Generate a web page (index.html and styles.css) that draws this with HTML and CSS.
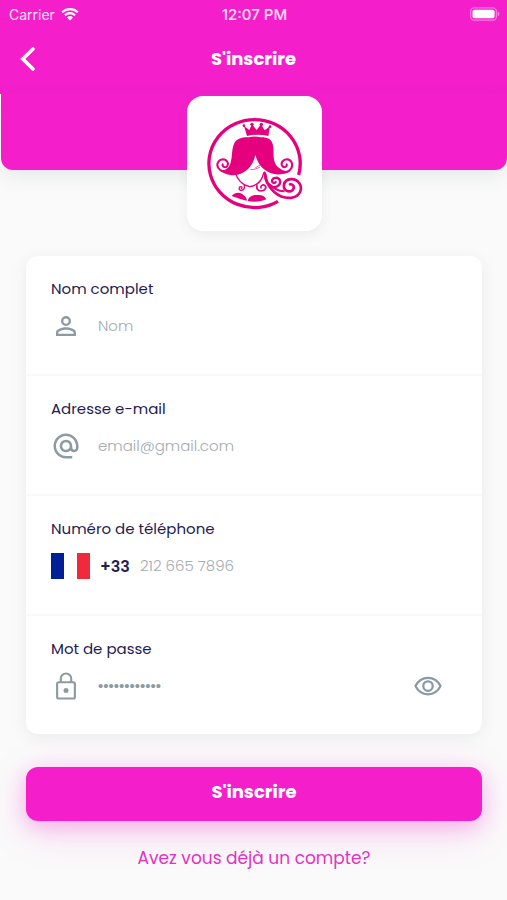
FILE: index.html
```html
<!DOCTYPE html>
<html lang="fr">
<head>
<meta charset="utf-8">
<meta name="viewport" content="width=device-width, initial-scale=1">
<title>S'inscrire</title>
<link rel="stylesheet" href="styles.css">
</head>
<body>
<header class="app-bar">
  <div class="status">
    <div class="carrier">
      <span>Carrier</span>
      <svg class="wifi" viewBox="0 0 18 14" aria-hidden="true">
        <path d="M1.2 5.2a11.3 11.3 0 0 1 15.6 0M4 8.2a7.2 7.2 0 0 1 10 0" fill="none" stroke="currentColor" stroke-width="2.2"/>
        <path d="M9 13.6l-3-3.1a4.3 4.3 0 0 1 6 0z" fill="currentColor"/>
      </svg>
    </div>
    <time>12:07 PM</time>
    <svg class="battery" viewBox="0 0 31 14" aria-hidden="true">
      <rect x=".7" y=".7" width="26.6" height="12.6" rx="3.6" fill="none" stroke="#fff" stroke-opacity=".4" stroke-width="1.4"/>
      <rect x="2.6" y="2.6" width="22.8" height="8.8" rx="1.8" fill="#fff"/>
      <path d="M28.6 4.8c2.4.6 2.4 3.8 0 4.4z" fill="#fff" fill-opacity=".45"/>
    </svg>
  </div>
  <div class="title-row">
    <button class="back" type="button" aria-label="Retour">
      <svg viewBox="0 0 16 26" aria-hidden="true"><path d="M13 3L2.8 13 13 23" fill="none" stroke="currentColor" stroke-width="3.6" stroke-linecap="round"/></svg>
    </button>
    <h1>S'inscrire</h1>
  </div>
</header>

<div class="banner">
  <div class="logo">
    <svg viewBox="20 18 405 405" aria-hidden="true">
      <g fill="none" stroke="#e5007e" stroke-linecap="round" stroke-linejoin="round">
        <path d="M355 255A137 132 0 1 0 293 334" stroke-width="10" stroke-linecap="butt"/>
        <path d="M152 246c-14 2-30-1-38-12-8-13 1-25 13-26 13 0 20 13 13 21-6 6-15 1-13-6" stroke-width="6"/>
        <path d="M292 246c16 5 34 1 41-11 7-14-1-26-13-27-13 0-20 12-14 20 6 7 15 2 13-5" stroke-width="6"/>
        <path d="M166 250c4 17 20 36 42 40 22-3 37-18 42-41" stroke-width="4"/>
        <path d="M192 286c2 10-4 16-11 15-7-2-6-11 1-11 4 1 4 5 1 6" stroke-width="4"/>
        <path d="M230 285c-3 12 3 18 12 18 12 0 18-10 12-16-6-5-14-1-12 6" stroke-width="5"/>
        <path d="M253 248c1 25 8 39 24 43 15 2 25-8 22-19-4-12-22-11-24 0 0 7 8 10 11 4" stroke-width="7"/>
        <path d="M255 254c4 41 40 74 80 69 24-4 33-27 22-43-11-18-42-17-46 4-3 17 14 25 25 17 9-8 3-20-7-18" stroke-width="8"/>
        <path d="M266 282c12 12 28 21 44 22" stroke-width="6"/>
        <path d="M212 239c9 0 18-3 26-7M226 233l14-9" stroke-width="2"/>
      </g>
      <g fill="#e5007e">
        <path d="M200 138l-9-30 16 12 8-17 14 17 13-17 11 18 16-12-5 29q-32-7-64 0z"/>
        <circle cx="191" cy="107" r="4"/><circle cx="215" cy="103" r="5"/><circle cx="243" cy="103" r="5"/><circle cx="269" cy="110" r="4"/>
        <path d="M116 238c16 6 29-2 34-17 7-20 3-43 12-62 9-15 26-18 45-17 10-3 22-3 32 0 21-1 34 5 38 20 5 20-1 43 9 61 10 15 29 25 47 18-14 12-36 15-55 10-26-7-44-24-53-56-6 26-18 42-34 51-17 10-31 12-45 8-12-1-23-8-30-16z"/>
        <path d="M154 318c10-12 26-13 35-3 7 5 10 10 11 17-11-2-28-7-46-14z"/>
        <path d="M202 333c3-14 16-19 29-18 13-1 23 3 27 13-17 8-36 9-56 5z"/>
      </g>
    </svg>
  </div>
</div>

<main>
  <form>
    <div class="card">
      <div class="field">
        <label for="name">Nom complet</label>
        <div class="control">
          <svg class="icon" viewBox="0 0 24 24" aria-hidden="true"><path d="M12 5.9a2.1 2.1 0 1 1 0 4.2 2.1 2.1 0 0 1 0-4.2m0 9c2.97 0 6.1 1.46 6.1 2.1v1.1H5.9V17c0-.64 3.13-2.1 6.1-2.1M12 4a4 4 0 1 0 0 8 4 4 0 0 0 0-8m0 9c-2.67 0-8 1.34-8 4v3h16v-3c0-2.66-5.33-4-8-4z"/></svg>
          <input id="name" type="text" placeholder="Nom">
        </div>
      </div>
      <div class="field">
        <label for="email">Adresse e-mail</label>
        <div class="control">
          <svg class="icon" viewBox="0 0 24 24" aria-hidden="true"><path d="M12 2C6.480 2 2 6.480 2 12s4.480 10 10 10h5v-2h-5c-4.340 0-8-3.660-8-8s3.660-8 8-8 8 3.660 8 8v1.430c0 .79-.71 1.570-1.500 1.570s-1.500-.78-1.500-1.570V12c0-2.760-2.240-5-5-5s-5 2.240-5 5 2.240 5 5 5c1.380 0 2.640-.56 3.540-1.470.65.89 1.770 1.470 2.960 1.470 1.970 0 3.500-1.600 3.500-3.570V12c0-5.520-4.480-10-10-10zm0 13c-1.660 0-3-1.340-3-3s1.340-3 3-3 3 1.340 3 3-1.340 3-3 3z"/></svg>
          <input id="email" type="email" placeholder="email@gmail.com">
        </div>
      </div>
      <div class="field">
        <label for="phone">Numéro de téléphone</label>
        <div class="control phone">
          <svg class="flag" viewBox="0 0 39 26" aria-hidden="true"><path fill="#001e96" d="M0 0h13v26H0z"/><path fill="#fff" d="M13 0h13v26H13z"/><path fill="#f02a3c" d="M26 0h13v26H26z"/></svg>
          <span class="prefix">+33</span>
          <input id="phone" type="tel" placeholder="212 665 7896">
        </div>
      </div>
      <div class="field">
        <label for="password">Mot de passe</label>
        <div class="control">
          <svg class="icon" viewBox="0 0 24 24" aria-hidden="true"><path fill="none" stroke="currentColor" stroke-width="1.700" d="M6.200 9h11.600a1.300 1.300 0 0 1 1.300 1.300v10.400a1.300 1.300 0 0 1-1.300 1.300H6.200a1.300 1.300 0 0 1-1.300-1.300V10.300A1.300 1.300 0 0 1 6.200 9zM7.800 9V6.200a4.200 4.200 0 0 1 8.400 0V9"/><circle cx="12" cy="15.500" r="2"/></svg>
          <input id="password" type="password" placeholder="••••••••••••">
          <button class="reveal" type="button" aria-label="Afficher le mot de passe">
            <svg class="icon" viewBox="0 0 24 24" aria-hidden="true"><path fill="none" stroke="currentColor" stroke-width="1.800" d="M2 12c1.900-4 5.700-6.600 10-6.600S20.100 8 22 12c-1.900 4-5.700 6.600-10 6.600S3.900 16 2 12z"/><circle cx="12" cy="12" r="3.800" fill="none" stroke="currentColor" stroke-width="1.800"/></svg>
          </button>
        </div>
      </div>
    </div>
    <button class="submit" type="submit">S'inscrire</button>
  </form>
  <a class="login" href="#">Avez vous déjà un compte?</a>
</main>
</body>
</html>
```

FILE: styles.css
```css
:root {
  --pink: #f41fcb;
  --navy: #1f2050;
  --muted: #8c9ba1;
}

* {
  box-sizing: border-box;
}

body {
  margin: 0;
  min-height: 100vh;
  background: #fafafa;
  color: var(--navy);
  font-family: Poppins, Inter, sans-serif;
  font-size: 15px;
}

button,
input {
  font: inherit;
  border: 0;
  padding: 0;
  background: none;
}

svg {
  display: block;
}

.app-bar {
  background: var(--pink);
  color: #fff;
}

.status {
  display: grid;
  grid-template-columns: 1fr auto 1fr;
  align-items: center;
  height: 28px;
  padding: 0 7px 0 9px;
  font: 500 15px Inter, sans-serif;
  color: #ffe3fa;
}

.carrier {
  display: flex;
  align-items: center;
  gap: 6px;
  font-size: 14px;
  font-weight: 400;
}

.wifi {
  width: 18px;
  height: 14px;
  color: #fff;
}

.battery {
  width: 30px;
  height: 14px;
  justify-self: end;
}

.title-row {
  display: grid;
  grid-template-columns: 1fr auto 1fr;
  align-items: center;
  height: 66px;
  padding: 0 20px 4px;
}

.back {
  width: 16px;
  height: 26px;
  color: #fff;
}

h1 {
  margin: 0;
  font-size: 18px;
  font-weight: 700;
  line-height: 24px;
}

.banner {
  display: flex;
  justify-content: center;
  height: 76px;
  margin-left: 1px;
  padding-top: 2px;
  border-radius: 0 0 12px 12px;
  background: var(--pink);
  box-shadow: 0 6px 20px rgba(60, 80, 90, 0.1);
}

.logo {
  width: 135px;
  height: 135px;
  border-radius: 16px;
  background: #fff;
  box-shadow: 0 4px 12px rgba(60, 80, 90, 0.08);
}

main {
  padding: 86px 25px 28px 26px;
}

.card {
  border-radius: 12px;
  background: #fff;
  box-shadow: 0 4px 16px rgba(60, 70, 80, 0.08);
}

.field {
  padding: 21px 25px 28px;
}

.field + .field {
  border-top: 2px solid #f9f9fa;
}

label {
  display: block;
  line-height: 24px;
}

.control {
  display: flex;
  align-items: center;
  gap: 17px;
  height: 40px;
  margin-top: 5px;
}

.icon {
  flex: none;
  width: 30px;
  height: 30px;
  fill: currentColor;
  color: var(--muted);
}

input {
  flex: 1;
  min-width: 0;
  height: 38px;
  padding-bottom: 2px;
  color: var(--navy);
  outline: 0;
}

input::placeholder {
  color: #a3abb0;
  font-weight: 300;
  opacity: 1;
}

#password::placeholder {
  font-family: "Liberation Sans", sans-serif;
  color: var(--muted);
}

.phone {
  gap: 10px;
}

.flag {
  width: 39px;
  height: 26px;
}

.prefix {
  font-size: 16px;
  font-weight: 600;
}

.reveal {
  margin-right: 14px;
}

.submit {
  display: block;
  width: 100%;
  height: 54px;
  margin-top: 33px;
  border-radius: 12px;
  background: var(--pink);
  color: #fff;
  font-size: 18px;
  font-weight: 700;
  line-height: 24px;
  padding-bottom: 4px;
  box-shadow: 0 10px 40px rgba(244, 31, 203, 0.18), 0 6px 20px rgba(244, 31, 203, 0.24);
}

.login {
  display: block;
  width: fit-content;
  margin: 25px auto 0;
  color: #e332c4;
  font-size: 17px;
  line-height: 24px;
  text-decoration: none;
}
```
